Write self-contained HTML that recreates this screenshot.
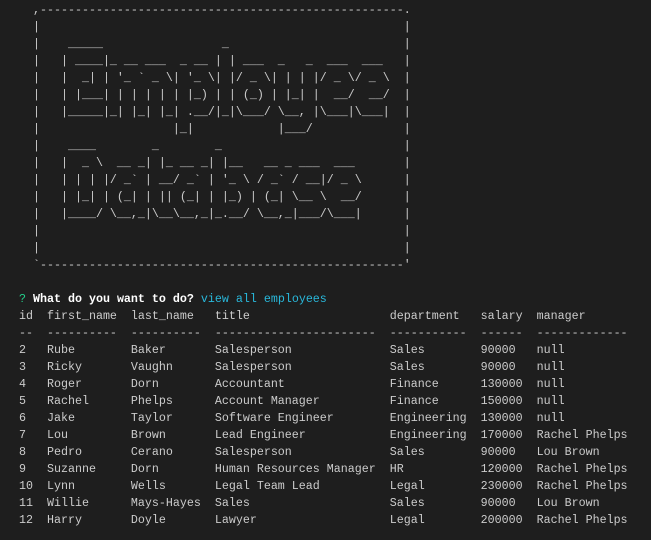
<!DOCTYPE html>
<html><head><meta charset="utf-8"><style>
html,body{margin:0;padding:0;background:#1e1e1e;width:651px;height:540px;overflow:hidden}
pre{margin:0;padding:1.5px 0 0 19px;font-family:"Liberation Mono",monospace;font-size:11.67px;line-height:17px;color:#cccccc;white-space:pre}
.g{color:#23d18b}.b{color:#ffffff;font-weight:bold}.c{color:#29b8db}
</style></head><body><pre>  ,----------------------------------------------------.
  |                                                    |
  |    _____                 _                         |
  |   | ____|_ __ ___  _ __ | | ___  _   _  ___  ___   |
  |   |  _| | '_ ` _ \| '_ \| |/ _ \| | | |/ _ \/ _ \  |
  |   | |___| | | | | | |_) | | (_) | |_| |  __/  __/  |
  |   |_____|_| |_| |_| .__/|_|\___/ \__, |\___|\___|  |
  |                   |_|            |___/             |
  |    ____        _        _                          |
  |   |  _ \  __ _| |_ __ _| |__   __ _ ___  ___       |
  |   | | | |/ _` | __/ _` | '_ \ / _` / __|/ _ \      |
  |   | |_| | (_| | || (_| | |_) | (_| \__ \  __/      |
  |   |____/ \__,_|\__\__,_|_.__/ \__,_|___/\___|      |
  |                                                    |
  |                                                    |
  `----------------------------------------------------'

<span class="g">?</span> <span class="b">What do you want to do?</span> <span class="c">view all employees</span>
id  first_name  last_name   title                    department   salary  manager
--  ----------  ----------  -----------------------  -----------  ------  -------------
2   Rube        Baker       Salesperson              Sales        90000   null
3   Ricky       Vaughn      Salesperson              Sales        90000   null
4   Roger       Dorn        Accountant               Finance      130000  null
5   Rachel      Phelps      Account Manager          Finance      150000  null
6   Jake        Taylor      Software Engineer        Engineering  130000  null
7   Lou         Brown       Lead Engineer            Engineering  170000  Rachel Phelps
8   Pedro       Cerano      Salesperson              Sales        90000   Lou Brown
9   Suzanne     Dorn        Human Resources Manager  HR           120000  Rachel Phelps
10  Lynn        Wells       Legal Team Lead          Legal        230000  Rachel Phelps
11  Willie      Mays-Hayes  Sales                    Sales        90000   Lou Brown
12  Harry       Doyle       Lawyer                   Legal        200000  Rachel Phelps
</pre></body></html>
